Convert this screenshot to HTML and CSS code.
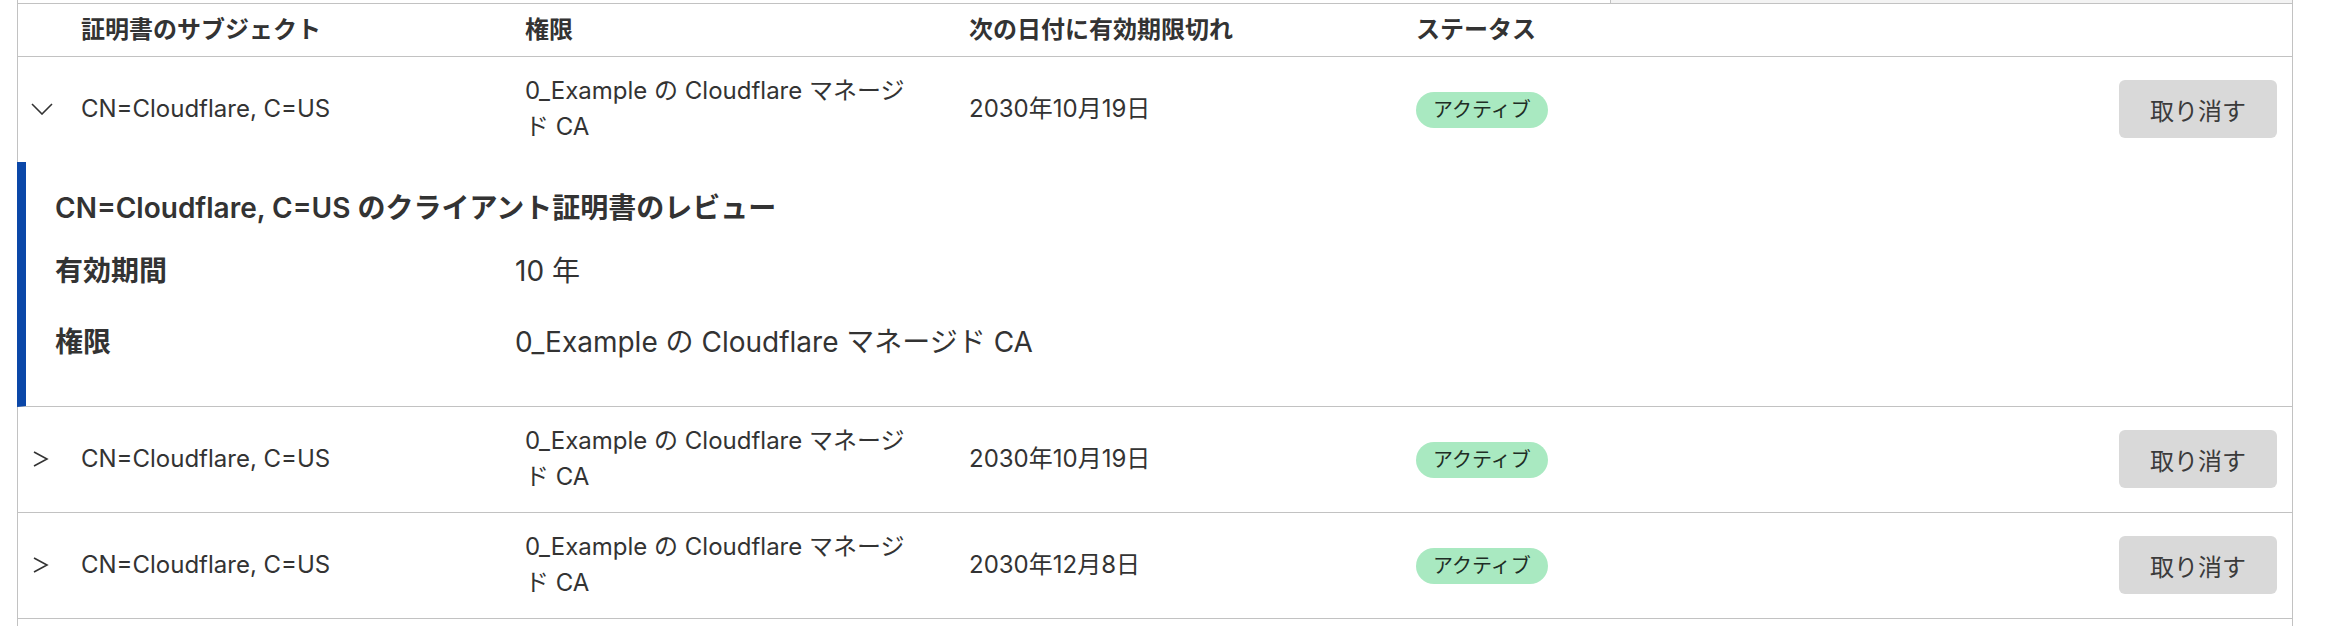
FILE: index.html
```html
<!DOCTYPE html>
<html lang="ja">

<head>
    <meta charset="UTF-8">
    <meta name="viewport" content="width=device-width, initial-scale=1.0">
    <title>クライアント証明書</title>
    <link rel="stylesheet" href="styles.css">
</head>

<body>
    <div class="table">
        <div class="table-top"><div class="scroll-end"></div></div>

        <div class="thead cols">
            <div></div>
            <div>証明書のサブジェクト</div>
            <div>権限</div>
            <div>次の日付に有効期限切れ</div>
            <div>ステータス</div>
            <div></div>
        </div>

        <div class="row cols open">
            <div class="toggle">
                <svg width="22" height="12" viewBox="0 0 22 12"><polyline points="1,1 11,11 21,1" /></svg>
            </div>
            <div>CN=Cloudflare, C=US</div>
            <div class="authority">0_Example の Cloudflare マネージド CA</div>
            <div>2030年10月19日</div>
            <div><span class="pill">アクティブ</span></div>
            <div><button class="revoke">取り消す</button></div>
        </div>

        <div class="detail">
            <h3>CN=Cloudflare, C=US のクライアント証明書のレビュー</h3>
            <div class="detail-row">
                <div class="label">有効期間</div>
                <div>10 年</div>
            </div>
            <div class="detail-row">
                <div class="label">権限</div>
                <div>0_Example の Cloudflare マネージド CA</div>
            </div>
        </div>

        <div class="row cols">
            <div class="toggle">
                <svg width="22" height="16" viewBox="0 0 22 16"><polyline points="3,1 16,8 3,15" /></svg>
            </div>
            <div>CN=Cloudflare, C=US</div>
            <div class="authority">0_Example の Cloudflare マネージド CA</div>
            <div>2030年10月19日</div>
            <div><span class="pill">アクティブ</span></div>
            <div><button class="revoke">取り消す</button></div>
        </div>

        <div class="row cols">
            <div class="toggle">
                <svg width="22" height="16" viewBox="0 0 22 16"><polyline points="3,1 16,8 3,15" /></svg>
            </div>
            <div>CN=Cloudflare, C=US</div>
            <div class="authority">0_Example の Cloudflare マネージド CA</div>
            <div>2030年12月8日</div>
            <div><span class="pill">アクティブ</span></div>
            <div><button class="revoke">取り消す</button></div>
        </div>
    </div>
</body>

</html>
```

FILE: styles.css
```css
html, body {
    height: 100%;
}
body {
    margin: 0;
    font-family: "Inter", "Noto Sans CJK JP", sans-serif;
    font-size: 24px;
    line-height: 36px;
    color: #333;
    background-color: #fff;
}
.table {
    min-height: 100%;
    margin: 0 45px 0 17px;
    border-left: 1px solid #c2c2c2;
    border-right: 1px solid #c2c2c2;
    box-sizing: border-box;
}
.table-top {
    display: flex;
    height: 3px;
}
.scroll-end {
    margin-left: auto;
    width: 681px;
    background-color: #f3f3f3;
    border-left: 1px solid #c2c2c2;
}
.cols {
    display: grid;
    grid-template-columns: 63px 444px 444px 447px 1fr auto;
    align-items: center;
}
.thead {
    padding: 8px 0;
    font-weight: 600;
    border-top: 1px solid #c2c2c2;
    border-bottom: 1px solid #c2c2c2;
}
.row {
    padding: 16px 15px 17px 0;
    border-bottom: 1px solid #c2c2c2;
}
.row.open {
    border-bottom: none;
}
.toggle {
    display: flex;
    padding-left: 13px;
}
.toggle svg {
    fill: none;
    stroke: #333;
    stroke-width: 1.6;
}
.authority {
    padding-right: 50px;
}
.pill {
    display: inline-block;
    height: 36px;
    padding: 0 17px;
    font-size: 20px;
    line-height: 36px;
    color: #1f2d25;
    background-color: #a9e9c1;
    border-radius: 18px;
}
.revoke {
    width: 158px;
    height: 58px;
    padding: 0;
    font-family: inherit;
    font-size: 24px;
    color: #3b3b3b;
    background-color: #d9d9d9;
    border: none;
    border-radius: 6px;
    cursor: pointer;
}
.detail {
    margin-left: -1px;
    padding: 25px 0 28px 29px;
    font-size: 28px;
    line-height: 42px;
    border-left: 9px solid #0b47a8;
    border-bottom: 1px solid #c2c2c2;
}
.detail h3 {
    margin: 0 0 7px;
    font-size: 28px;
    font-weight: 600;
    line-height: 42px;
}
.detail-row {
    display: grid;
    grid-template-columns: 460px 1fr;
    padding: 14px 0 15px;
}
.label {
    font-weight: 600;
}
```
